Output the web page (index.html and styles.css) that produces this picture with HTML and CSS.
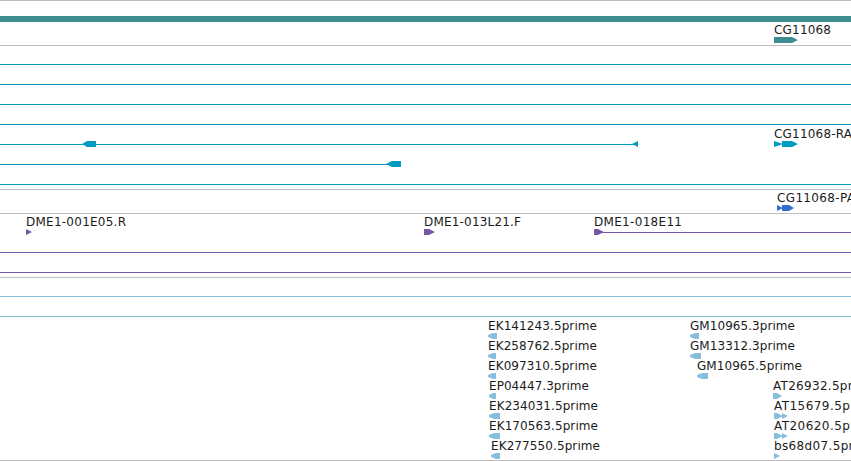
FILE: index.html
```
<!DOCTYPE html>
<html lang="en">
<head>
<meta charset="utf-8">
<title>Genome tracks</title>
<link rel="stylesheet" href="styles.css">
</head>
<body>
<main class="browser">
  <section class="track gene">
    <svg class="lane tall"><path d="M0 12h851v6H0z"/></svg>
    <svg class="lane"><text x="774" y="9" textLength="57">CG11068</text><path d="M774 12h18l6 3-6 3h-18z"/></svg>
  </section>
  <section class="track transcript">
    <svg class="lane"><path d="M0 15h851v1H0z"/></svg>
    <svg class="lane"><path d="M0 15h851v1H0z"/></svg>
    <svg class="lane"><path d="M0 15h851v1H0z"/></svg>
    <svg class="lane"><path d="M0 15h851v1H0z"/></svg>
    <svg class="lane"><text x="774" y="9" textLength="78">CG11068-RA</text><path d="M0 15h634v1H0zM96 12v6h-9l-5-3 5-3zM638 12v6l-6-3zM774 12l9 3-9 3zM782 12h10l6 3-6 3h-10z"/></svg>
    <svg class="lane"><path d="M0 15h390v1H0zM401 12v6h-9l-6-3 6-3z"/></svg>
    <svg class="lane"><path d="M0 15h851v1H0z"/></svg>
  </section>
  <section class="track protein">
    <svg class="lane"><text x="777" y="9" textLength="78">CG11068-PA</text><path d="M777 12l6 3-6 3zM782 12h7l5 3-5 3h-7z"/></svg>
  </section>
  <section class="track bac">
    <svg class="lane">
      <text x="26" y="9" textLength="100">DME1-001E05.R</text><path d="M26 12l6 3-6 3z"/>
      <text x="424" y="9" textLength="97">DME1-013L21.F</text><path d="M424 12h5l6 3-6 3h-5z"/>
      <text x="594" y="9" textLength="88">DME1-018E11</text><path d="M594 12h4l6 3-6 3h-4zM600 15h251v1H600z"/>
    </svg>
    <svg class="lane"><path d="M0 15h851v1H0z"/></svg>
    <svg class="lane"><path d="M0 15h851v1H0z"/></svg>
  </section>
  <section class="track est">
    <svg class="lane"><path d="M0 15h851v1H0z"/></svg>
    <svg class="lane"><path d="M0 15h851v1H0z"/></svg>
    <svg class="lane">
      <text x="488" y="9" textLength="109">EK141243.5prime</text><path d="M497 12v6h-4l-5-2v-2l5-2z"/>
      <text x="690" y="9" textLength="105">GM10965.3prime</text><path d="M699 12v6h-4l-5-2v-2l5-2z"/>
    </svg>
    <svg class="lane">
      <text x="488" y="9" textLength="109">EK258762.5prime</text><path d="M496 12v6h-3l-5-2v-2l5-2z"/>
      <text x="690" y="9" textLength="105">GM13312.3prime</text><path d="M701 12v6h-6l-5-2v-2l5-2z"/>
    </svg>
    <svg class="lane">
      <text x="488" y="9" textLength="109">EK097310.5prime</text><path d="M496 12v6h-3l-5-2v-2l5-2z"/>
      <text x="697" y="9" textLength="105">GM10965.5prime</text><path d="M708 12v6h-6l-5-2v-2l5-2z"/>
    </svg>
    <svg class="lane">
      <text x="489" y="9" textLength="100">EP04447.3prime</text><path d="M496 12v6h-3l-4-2v-2l4-2z"/>
      <text x="773" y="9" textLength="103">AT26932.5prime</text><path d="M773 12h4l5 3-5 3h-4z"/>
    </svg>
    <svg class="lane">
      <text x="489" y="9" textLength="109">EK234031.5prime</text><path d="M500 12v6h-6l-5-2v-2l5-2z"/>
      <text x="774" y="9" textLength="105">AT15679.5prime</text><path d="M774 12h3l6 3-6 3h-3zM782 12l6 3-6 3z"/>
    </svg>
    <svg class="lane">
      <text x="489" y="9" textLength="109">EK170563.5prime</text><path d="M500 12v6h-6l-5-2v-2l5-2z"/>
      <text x="774" y="9" textLength="105">AT20620.5prime</text><path d="M774 12h3l6 3-6 3h-3zM782 12l6 3-6 3z"/>
    </svg>
    <svg class="lane last">
      <text x="491" y="9" textLength="109">EK277550.5prime</text><path d="M500 12v6h-4l-5-2v-2l5-2z"/>
      <text x="774" y="9" textLength="103">bs68d07.5prime</text><path d="M774 12l6 3-6 3z"/>
    </svg>
  </section>
</main>
</body>
</html>
```

FILE: styles.css
```
body {
  margin: 0;
  background: #fff;
}

.browser {
  width: 851px;
  height: 461px;
  box-sizing: border-box;
  overflow: hidden;
  border-bottom: 1px solid #bebebe;
}

.track {
  border-top: 1px solid #bebebe;
  padding-top: 3px;
}

.lane {
  display: block;
  width: 851px;
  height: 20px;
  overflow: hidden;
}

.tall { height: 21px; }
.last { height: 19px; }

.lane text {
  font: 12px "DejaVu Sans", sans-serif;
  fill: #1c1c1c;
}

.gene { fill: #3c8c90; }
.transcript { fill: #009bbf; }
.protein { fill: #326fcc; }
.bac { fill: #7357a8; }
.est { fill: #87bddd; }
```
